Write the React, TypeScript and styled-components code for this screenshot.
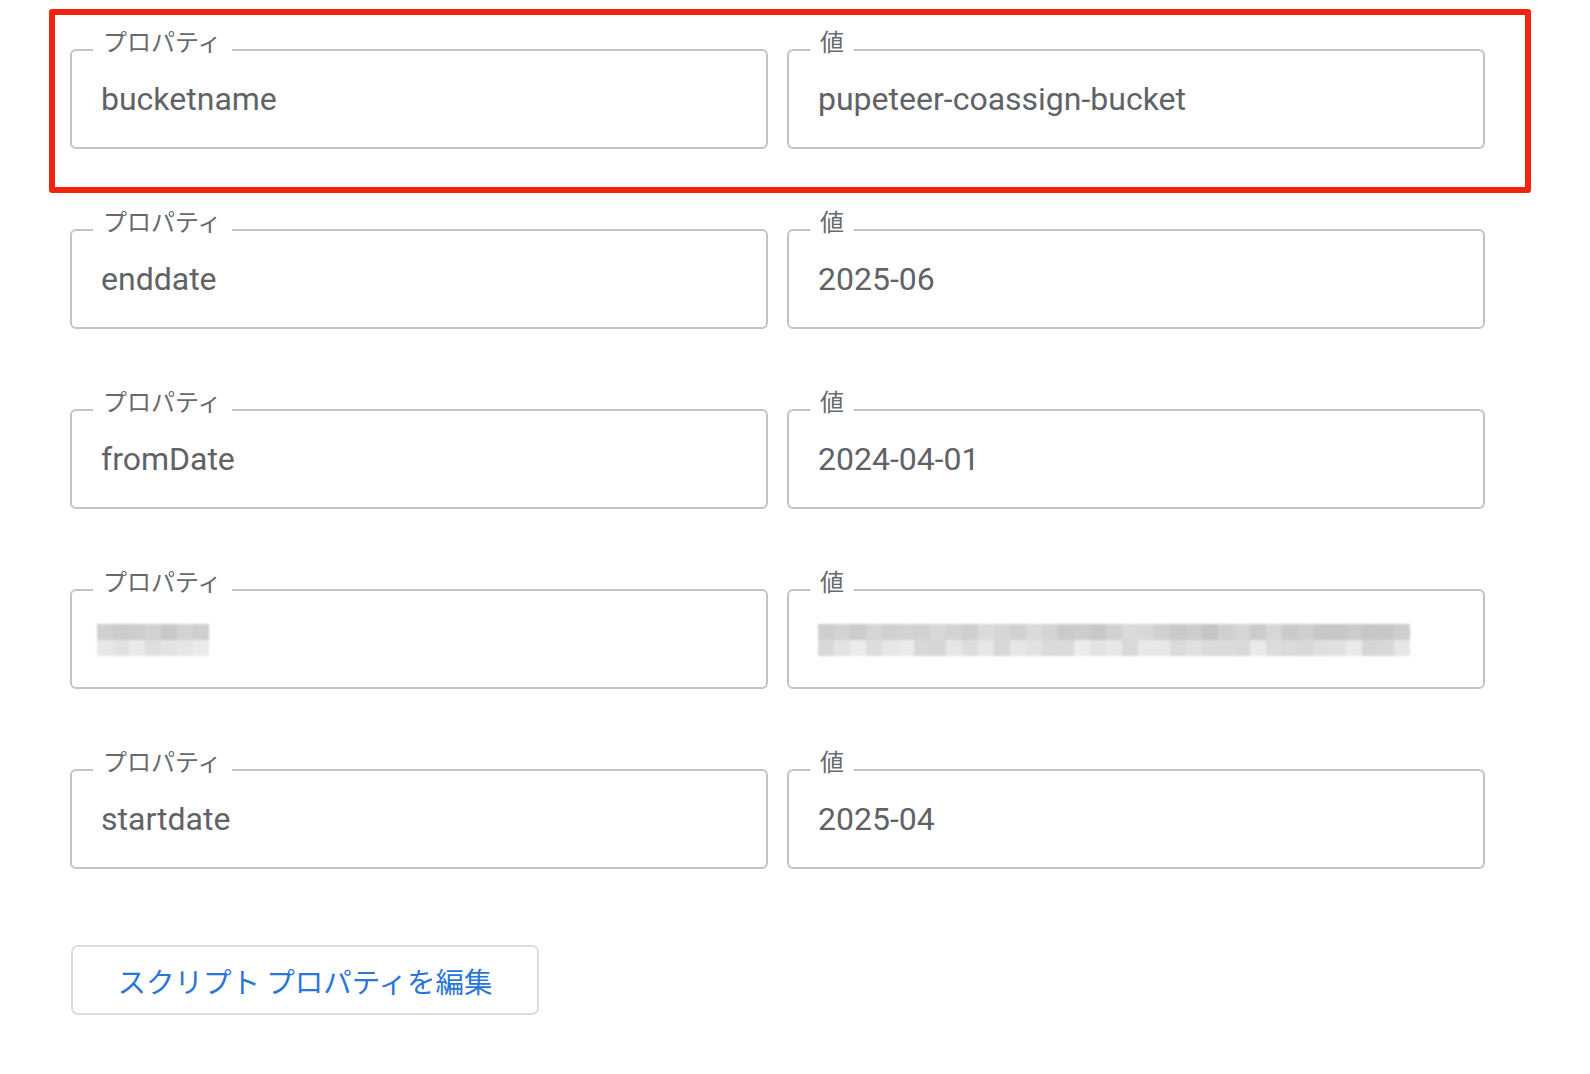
import React from 'react';
import styled, { createGlobalStyle } from 'styled-components';

const GlobalStyle = createGlobalStyle`
  html, body {
    margin: 0;
    padding: 0;
    background: #ffffff;
  }
  body {
    font-family: Roboto, "Noto Sans CJK JP", sans-serif;
    color: #5f6368;
  }
`;

const Page = styled.div`
  width: 1590px;
  min-height: 1074px;
  padding-top: 9px;
  box-sizing: border-box;
`;

const Highlight = styled.div`
  margin-left: 49px;
  width: 1482px;
  box-sizing: border-box;
  border: 6px solid #f2250c;
  border-radius: 3px;
  padding: 34px 0 38px 15px;
`;

const List = styled.div`
  display: flex;
  flex-direction: column;
  gap: 80px;
  margin: 36px 0 0 70px;
`;

const Row = styled.div`
  display: flex;
  gap: 19px;
`;

const Field = styled.div`
  position: relative;
  width: 698px;
  height: 100px;
  box-sizing: border-box;
  border: 2px solid #c4c4c4;
  border-radius: 6px;
  display: flex;
  align-items: center;
  padding-left: 29px;
`;

const Label = styled.span`
  position: absolute;
  top: -25px;
  left: 21px;
  padding: 0 10px;
  background: #ffffff;
  font-family: "Noto Sans CJK JP", sans-serif;
  font-size: 24px;
  line-height: 30px;
  color: #666a6e;
`;

const Value = styled.span`
  font-family: Roboto, sans-serif;
  font-size: 32px;
  line-height: 1;
  color: #5f6368;
`;

const Mosaic = styled.div<{ $offset: number }>`
  display: grid;
  grid-auto-flow: column;
  grid-template-rows: 16px 16px;
  grid-auto-columns: 16px;
  margin-left: ${(p) => p.$offset}px;
  margin-top: 2px;
  filter: blur(1.2px);
`;

const Cell = styled.div`
  width: 16px;
  height: 16px;
`;

const ButtonRow = styled.div`
  margin: 76px 0 0 71px;
`;

const EditButton = styled.button`
  width: 468px;
  height: 70px;
  box-sizing: border-box;
  border: 2px solid #dcdcdc;
  border-radius: 7px;
  background: #ffffff;
  color: #2a75d8;
  font-family: "Noto Sans CJK JP", sans-serif;
  font-size: 28.5px;
  cursor: pointer;
`;

const rows = [
  { key: 'bucketname', value: 'pupeteer-coassign-bucket' },
  { key: 'enddate', value: '2025-06' },
  { key: 'fromDate', value: '2024-04-01' },
  { key: '', value: '', hidden: true },
  { key: 'startdate', value: '2025-04' },
];

const shade = (seed: number, light: boolean) => {
  const v = Math.abs(Math.sin(seed * 12.9898) * 43758.5453) % 1;
  const base = light ? 214 : 196;
  const c = Math.round(base + v * 22);
  return `rgb(${c},${c},${c + 1})`;
};

const BlurredText = ({ cols, offset, seed }: { cols: number; offset: number; seed: number }) => {
  const cells = [];
  for (let i = 0; i < cols; i++) {
    cells.push(<Cell key={`a${i}`} style={{ background: shade(seed + i, false) }} />);
    cells.push(<Cell key={`b${i}`} style={{ background: shade(seed + i + 100, true) }} />);
  }
  return <Mosaic $offset={offset}>{cells}</Mosaic>;
};

const PropertyRow = ({ k, v, hidden }: { k: string; v: string; hidden?: boolean }) => (
  <Row>
    <Field>
      <Label>プロパティ</Label>
      {hidden ? <BlurredText cols={7} offset={-4} seed={3} /> : <Value>{k}</Value>}
    </Field>
    <Field>
      <Label>値</Label>
      {hidden ? <BlurredText cols={37} offset={0} seed={17} /> : <Value>{v}</Value>}
    </Field>
  </Row>
);

export default function App() {
  const [first, ...rest] = rows;
  return (
    <>
      <GlobalStyle />
      <Page>
        <Highlight>
          <PropertyRow k={first.key} v={first.value} />
        </Highlight>
        <List>
          {rest.map((r, i) => (
            <PropertyRow key={i} k={r.key} v={r.value} hidden={r.hidden} />
          ))}
        </List>
        <ButtonRow>
          <EditButton>スクリプト プロパティを編集</EditButton>
        </ButtonRow>
      </Page>
    </>
  );
}
